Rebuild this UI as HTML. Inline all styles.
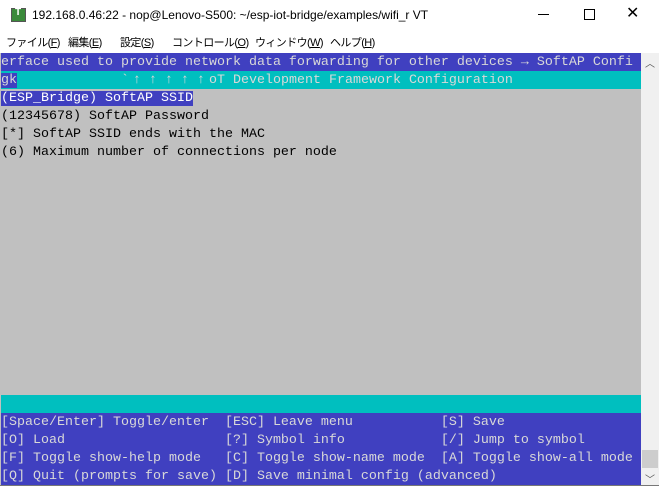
<!DOCTYPE html>
<html><head><meta charset="utf-8"><style>
body{margin:0;width:659px;height:486px;overflow:hidden;background:#fff;font-family:"Liberation Sans","Noto Sans CJK JP",sans-serif;position:relative}
.title{position:absolute;left:0;top:0;width:659px;height:30px;font-size:12px;color:#000}
.title .t{position:absolute;left:32px;top:8px}
.icon{position:absolute;left:11px;top:8px;width:13px;height:12px;background:#3a8a3a;border:1px solid #555}
.icon:after{content:"T";position:absolute;left:3px;top:-2px;font-size:10px;color:#fff;font-weight:bold}
.menu{position:absolute;left:0;top:30px;height:22px;width:659px;font-size:11px;letter-spacing:-0.6px}
.menu span{position:absolute;top:4px}
.term{position:absolute;left:0;top:53px;width:641px;height:432px;background:#c0c0c0;font-family:"Liberation Mono","Noto Sans CJK JP",monospace;font-size:13.33px;}
.row{position:absolute;left:1px;height:18px;line-height:19px;white-space:pre;width:640px}
.b{background:#4040c0;color:#d8d8d8}
.c{background:#00bfbf;color:#d8d8d8}
.a{display:inline-block;width:16px;text-align:center}
.sb{position:absolute;left:641px;top:53px;width:18px;height:432px;background:#f0f0f0}
.bot{position:absolute;left:0;top:485px;width:659px;height:1px;background:#777}
</style></head><body>
<div class="title"><div class="icon"></div><div class="t">192.168.0.46:22 - nop@Lenovo-S500: ~/esp-iot-bridge/examples/wifi_r VT</div>
<div style="position:absolute;left:538px;top:14px;width:11px;height:1px;background:#000"></div>
<div style="position:absolute;left:584px;top:9px;width:9px;height:9px;border:1px solid #000"></div>
<div style="position:absolute;left:626px;top:3px;font-size:16px">✕</div></div>
<div class="menu"><span style="left:6px">ファイル(<u>F</u>)</span><span style="left:68px">編集(<u>E</u>)</span><span style="left:120px">設定(<u>S</u>)</span><span style="left:172px">コントロール(<u>O</u>)</span><span style="left:255px">ウィンドウ(<u>W</u>)</span><span style="left:330px">ヘルプ(<u>H</u>)</span></div>
<div class="term">
<div class="row b" style="top:0">erface used to provide network data forwarding for other devices → SoftAP Confi</div>
<div class="row c" style="top:18px"><span class="b">gk</span>             `<span class="a">↑</span><span class="a">↑</span><span class="a">↑</span><span class="a">↑</span><span class="a">↑</span>oT Development Framework Configuration</div>
<div class="row" style="top:36px"><span style="background:#4040c0;color:#fff">(ESP_Bridge) SoftAP SSID</span></div>
<div class="row" style="top:54px">(12345678) SoftAP Password</div>
<div class="row" style="top:72px">[*] SoftAP SSID ends with the MAC</div>
<div class="row" style="top:90px">(6) Maximum number of connections per node</div>
<div class="row c" style="top:342px"> </div>
<div class="row b" style="top:360px">[Space/Enter] Toggle/enter  [ESC] Leave menu           [S] Save</div>
<div class="row b" style="top:378px">[O] Load                    [?] Symbol info            [/] Jump to symbol</div>
<div class="row b" style="top:396px">[F] Toggle show-help mode   [C] Toggle show-name mode  [A] Toggle show-all mode</div>
<div class="row b" style="top:414px">[Q] Quit (prompts for save) [D] Save minimal config (advanced)</div>
</div>
<div class="sb"><div style="position:absolute;left:4px;top:2px;font-size:10px;color:#555">︿</div>
<div style="position:absolute;left:1px;top:397px;width:16px;height:18px;background:#cdcdcd"></div>
<div style="position:absolute;left:4px;top:418px;font-size:10px;color:#555">﹀</div></div>
<div class="bot"></div>
</body></html>
